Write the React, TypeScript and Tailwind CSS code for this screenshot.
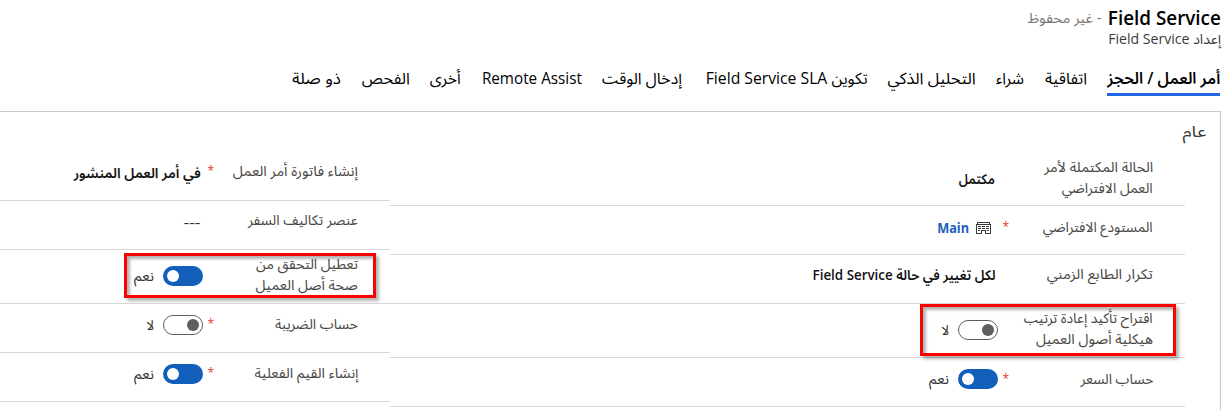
import { useLayoutEffect, useRef } from "react";
import type { ReactNode } from "react";

/** Single line of text condensed or widened to a given width. */
function Fit({ w, className = "", children }: { w: number; className?: string; children: ReactNode }) {
  const ref = useRef<HTMLSpanElement>(null);
  useLayoutEffect(() => {
    const el = ref.current;
    if (el && el.offsetWidth) {
      el.style.transform = `scaleX(${w / el.getBoundingClientRect().width})`;
    }
  }, [w]);
  return (
    <span className={`box-content flex shrink-0 justify-start ${className}`} style={{ width: w }}>
      <span ref={ref} className="block shrink-0 origin-right whitespace-nowrap">
        {children}
      </span>
    </span>
  );
}

const tabs: { label: string; w: number; gap: string }[] = [
  { label: "اتفاقية", w: 42, gap: "mr-[20px]" },
  { label: "شراء", w: 28, gap: "mr-[21px]" },
  { label: "التحليل الذكي", w: 88, gap: "mr-[20px]" },
  { label: "تكوين Field Service SLA", w: 162, gap: "mr-[20px]" },
  { label: "إدخال الوقت", w: 80, gap: "mr-[24px]" },
  { label: "Remote Assist", w: 100, gap: "mr-[20px]" },
  { label: "أخرى", w: 31, gap: "mr-[21px]" },
  { label: "الفحص", w: 48, gap: "mr-[20px]" },
  { label: "ذو صلة", w: 49, gap: "mr-[21px]" },
];

function Toggle({ on }: { on: boolean }) {
  return on ? (
    <span className="flex h-5 w-10 shrink-0 items-center justify-end rounded-full bg-[#115ebb] px-1">
      <span className="size-3 rounded-full bg-white" />
    </span>
  ) : (
    <span className="flex h-5 w-10 shrink-0 items-center justify-start rounded-full border border-[#605e5c] bg-white px-[3px]">
      <span className="size-3 rounded-full bg-[#605e5c]" />
    </span>
  );
}

function Warehouse() {
  return (
    <svg width="15" height="12" viewBox="0 0 15 12" fill="none" stroke="#3b3a39" shapeRendering="crispEdges">
      <path d="M1 .5h13M0 2.5h15M1.5 1v1M13.5 1v1M.5 2v10M14.5 2v10M0 11.5h6M9 11.5h6M5.5 9v3M9.5 9v3M5 8.5h5" />
      <path d="M2 4.5h3M6 4.5h3M10 4.5h3M2 6.5h3M6 6.5h3M10 6.5h3M2 8.5h2M11 8.5h2" />
    </svg>
  );
}

function Row({
  height,
  lines,
  pad,
  required = false,
  children,
}: {
  height: string;
  lines: [string, number][];
  pad: string;
  required?: boolean;
  children: ReactNode;
}) {
  return (
    <div className={`flex items-start border-b border-[#d8d8d8] pr-[32px] ${height}`}>
      <div className={`w-[144px] shrink-0 text-sm leading-[21px] text-[#484644] ${pad}`}>
        {lines.map(([t, w]) => (
          <Fit key={t} w={w}>{t}</Fit>
        ))}
      </div>
      <div className={`w-[11px] shrink-0 text-xs leading-[21px] text-[#e8352e] ${pad}`}>{required ? "*" : ""}</div>
      {children}
    </div>
  );
}

function Switch({ on, pad }: { on: boolean; pad: string }) {
  return (
    <div className={`flex items-center gap-[9px] text-sm leading-5 text-[#323130] ${pad}`}>
      <Toggle on={on} />
      <Fit w={on ? 20 : 8}>{on ? "نعم" : "لا"}</Fit>
    </div>
  );
}

const bold = "text-sm leading-5 font-semibold text-[#111]";
const mark = "pointer-events-none absolute border-3 border-[#fe0000] shadow-[3px_3px_3px_rgba(0,0,0,0.3),inset_3px_3px_3px_rgba(0,0,0,0.3)]";

export default function App() {
  return (
    <div
      dir="rtl"
      className="relative flex h-[410px] w-[1231px] flex-col overflow-hidden bg-white pr-[10px] font-['Open_Sans','Noto_Sans_Arabic',sans-serif] text-black"
    >
      <header className="h-[50px] shrink-0 pt-[5px]">
        <div className="flex h-[26px] items-center gap-[7px]">
          <Fit w={113} className="text-xl leading-[26px] font-semibold">Field Service</Fit>
          <Fit w={74} className="text-sm leading-[26px] text-[#797775]">- غير محفوظ</Fit>
        </div>
        <Fit w={113} className="text-sm leading-4 text-[#3b3a39]">إعداد Field Service</Fit>
      </header>
      <nav className="flex h-[61px] shrink-0 items-start pt-4 text-base leading-6">
        <div className="mr-px border-b-3 border-[#2266e3] pb-[3px] font-semibold">
          <Fit w={113}>أمر العمل / الحجز</Fit>
        </div>
        {tabs.map((t) => (
          <Fit key={t.label} w={t.w} className={t.gap}>{t.label}</Fit>
        ))}
      </nav>
      <main className="h-[299px] border-t border-r border-[#c8c8c8]">
        <h2 className="flex h-[39px] items-center pr-[14px] pb-px text-base text-[#3b3a39]">
          <Fit w={24}>عام</Fit>
        </h2>
        <div className="flex items-start pr-[35px]">
          <section className="w-[795px]">
            <Row height="h-[55px]" pad="pt-[5px]" lines={[["الحالة المكتملة لأمر", 109], ["العمل الافتراضي", 91]]}>
              <Fit w={36} className={`pt-[18px] pr-[3px] ${bold}`}>مكتمل</Fit>
            </Row>
            <Row height="h-[49px]" pad="pt-[10px]" required lines={[["المستودع الافتراضي", 110]]}>
              <div className="flex items-center gap-[7px] pt-[12px] pr-[7px] text-sm leading-5 font-bold text-[#1b5fbe]">
                <Warehouse />
                <Fit w={32}>Main</Fit>
              </div>
            </Row>
            <Row height="h-[49px]" pad="pt-[8px]" lines={[["تكرار الطابع الزمني", 106]]}>
              <Fit w={183} className={`pt-[10px] pr-[2px] ${bold}`}>لكل تغيير في حالة Field Service</Fit>
            </Row>
            <Row height="h-[54px]" pad="pt-[3px]" lines={[["اقتراح تأكيد إعادة ترتيب", 129], ["هيكلية أصول العميل", 117]]}>
              <Switch on={false} pad="pt-[16px]" />
            </Row>
            <Row height="h-[49px]" pad="pt-[10px]" required lines={[["حساب السعر", 73]]}>
              <Switch on pad="pt-[11px]" />
            </Row>
          </section>
          <section className="w-[390px]">
            <Row height="h-[50px]" pad="pt-[9px]" required lines={[["إنشاء فاتورة أمر العمل", 125]]}>
              <Fit w={127} className={`pt-[12px] pr-[2px] ${bold}`}>في أمر العمل المنشور</Fit>
            </Row>
            <Row height="h-[49px]" pad="pt-[8px]" lines={[["عنصر تكاليف السفر", 110]]}>
              <Fit w={17} className="pt-[12px] pr-[2px] text-sm leading-5 text-[#323130]">---</Fit>
            </Row>
            <Row height="h-[54px]" pad="pt-[3px]" lines={[["تعطيل التحقق من", 102], ["صحة أصل العميل", 102]]}>
              <Switch on pad="pt-[16px]" />
            </Row>
            <Row height="h-[49px]" pad="pt-[9px]" required lines={[["حساب الضريبة", 83]]}>
              <Switch on={false} pad="pt-[11px]" />
            </Row>
            <Row height="h-[49px]" pad="pt-[9px]" required lines={[["إنشاء القيم الفعلية", 104]]}>
              <Switch on pad="pt-[11px]" />
            </Row>
          </section>
        </div>
      </main>
      <div className={`top-[253px] left-[124px] h-[45px] w-[252px] ${mark}`} />
      <div className={`top-[304px] left-[920px] h-[52px] w-[256px] ${mark}`} />
    </div>
  );
}
